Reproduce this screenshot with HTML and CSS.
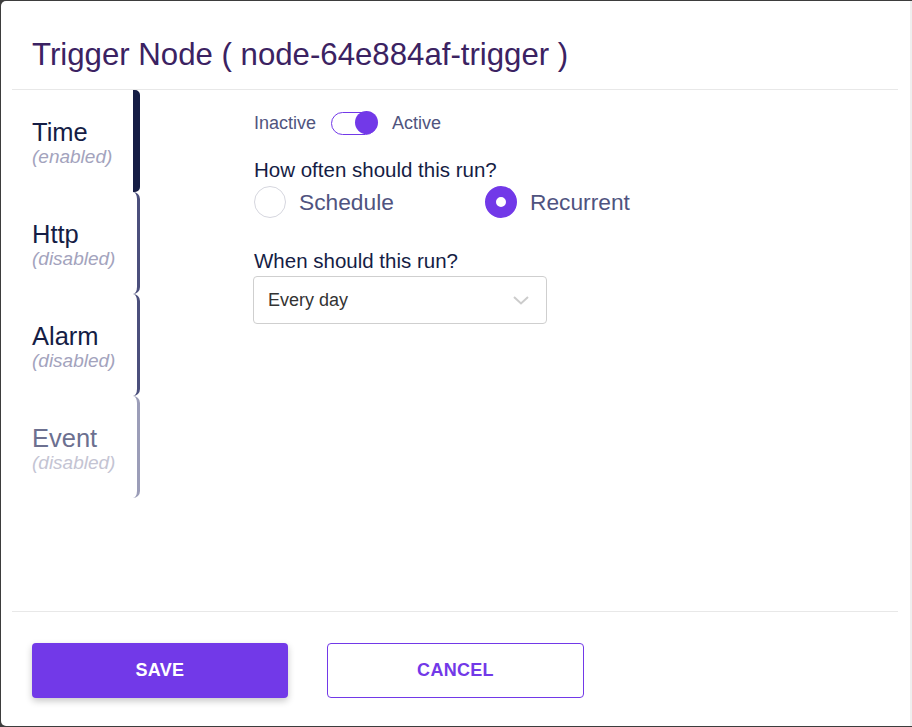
FILE: index.html
```html
<!DOCTYPE html>
<html lang="en">
<head>
<meta charset="utf-8">
<title>Trigger Node</title>
<link rel="stylesheet" href="styles.css">
</head>
<body>
<div class="backdrop">
  <div class="modal">
    <div class="modal-main">
      <header class="modal-header">
        <h1 class="title">Trigger Node ( node-64e884af-trigger )</h1>
      </header>
      <div class="modal-body">
        <nav class="tabs">
          <div class="tab tab-active"><span class="tab-name">Time</span><span class="tab-status">(enabled)</span></div>
          <div class="tab"><span class="tab-name">Http</span><span class="tab-status">(disabled)</span></div>
          <div class="tab"><span class="tab-name">Alarm</span><span class="tab-status">(disabled)</span></div>
          <div class="tab tab-muted"><span class="tab-name">Event</span><span class="tab-status">(disabled)</span></div>
        </nav>
        <section class="panel">
          <div class="switch-row">
            <span class="switch-label">Inactive</span>
            <span class="switch"><span class="switch-knob"></span></span>
            <span class="switch-label">Active</span>
          </div>
          <div class="question">How often should this run?</div>
          <div class="radio-row">
            <label class="radio-option"><span class="radio"></span><span class="radio-label">Schedule</span></label>
            <label class="radio-option"><span class="radio radio-checked"></span><span class="radio-label">Recurrent</span></label>
          </div>
          <div class="question question-second">When should this run?</div>
          <div class="select">
            <span class="select-value">Every day</span>
            <svg class="chevron" width="16" height="9" viewBox="0 0 16 9"><path d="M1 1 L8 7.5 L15 1" fill="none" stroke="#cccccc" stroke-width="2"/></svg>
          </div>
        </section>
      </div>
      <footer class="modal-footer">
        <button class="btn btn-primary">SAVE</button>
        <button class="btn btn-outline">CANCEL</button>
      </footer>
    </div>
    <div class="scroll-track"></div>
  </div>
</div>
</body>
</html>
```
FILE: styles.css
```css
* { box-sizing: border-box; }
html, body { margin: 0; padding: 0; }
body {
  background: #3d3d3d;
  font-family: "Liberation Sans", Arial, sans-serif;
  width: 912px;
  height: 727px;
  overflow: hidden;
}
.backdrop {
  padding: 1px 0 0 1px;
  height: 727px;
}
.modal {
  display: flex;
  height: 725px;
  background: #ffffff;
  border-radius: 5px 0 0 5px;
  overflow: hidden;
}
.modal-main {
  flex: 1;
  display: flex;
  flex-direction: column;
  padding: 0 12px 0 11px;
}
.scroll-track {
  width: 2px;
  background: #efefef;
}
.modal-header {
  height: 89px;
  border-bottom: 1px solid #e8e8e8;
  padding: 36px 0 0 20px;
}
.title {
  margin: 0;
  font-weight: 400;
  font-size: 31.2px;
  line-height: 36px;
  color: #3b2262;
}
.modal-body {
  flex: 1;
  display: flex;
}
.tabs {
  width: 128px;
  display: flex;
  flex-direction: column;
}
.tab {
  height: 102px;
  padding: 28px 0 0 20px;
  border-right: 3px solid #4b4f7c;
  border-radius: 0 7px 7px 0;
  display: flex;
  flex-direction: column;
}
.tab-active {
  border-right: 7px solid #151d45;
  border-radius: 3px 5px 5px 3px;
}
.tab-muted { border-right-color: #9b9db8; }
.tab-name {
  font-size: 25.5px;
  line-height: 28.75px;
  color: #151d45;
}
.tab-status {
  font-size: 19px;
  line-height: 19px;
  font-style: italic;
  color: #a3a3bd;
}
.tab-muted .tab-name { color: #6c7090; }
.tab-muted .tab-status { color: #c4c4d3; }
.panel {
  flex: 1;
  padding: 21px 0 0 114px;
}
.switch-row {
  display: flex;
  align-items: center;
  gap: 15px;
  height: 24px;
}
.switch-label {
  font-size: 18px;
  color: #50547e;
}
.switch {
  position: relative;
  width: 46px;
  height: 23px;
  border: 1.5px solid #7239e8;
  border-radius: 12px;
}
.switch-knob {
  position: absolute;
  top: -1.5px;
  right: -1.5px;
  width: 23px;
  height: 23px;
  border-radius: 50%;
  background: #7239e8;
}
.question {
  margin-top: 23px;
  font-size: 20.5px;
  line-height: 24px;
  color: #151d45;
}
.question-second { margin-top: 31px; }
.radio-row {
  margin-top: 4px;
  display: grid;
  grid-template-columns: 231px 231px;
  height: 32px;
}
.radio-option {
  display: flex;
  align-items: center;
  gap: 13px;
}
.radio {
  width: 32px;
  height: 32px;
  border-radius: 50%;
  border: 1px solid #d5d6de;
  background: #fff;
}
.radio-checked {
  border: 11px solid #7239e8;
}
.radio-label {
  font-size: 22.75px;
  color: #4f5380;
}
.select {
  margin: 3px 0 0 -1px;
  width: 294px;
  height: 48px;
  border: 1px solid #cfcfcf;
  border-radius: 4px;
  display: flex;
  align-items: center;
  justify-content: space-between;
  padding: 0 17px 0 14px;
}
.select-value {
  font-size: 18px;
  color: #333333;
}
.chevron { display: block; }
.modal-footer {
  height: 115px;
  border-top: 1px solid #e8e8e8;
  padding: 31px 0 0 20px;
  display: flex;
  align-items: flex-start;
  gap: 39px;
}
.btn {
  width: 256px;
  height: 55px;
  border-radius: 4px;
  font-family: "Liberation Sans", Arial, sans-serif;
  font-weight: 700;
  font-size: 18px;
  letter-spacing: 0.3px;
  cursor: pointer;
}
.btn-primary {
  background: #7239e8;
  color: #ffffff;
  border: none;
  box-shadow: 0 3px 7px rgba(0, 0, 0, 0.22);
}
.btn-outline {
  width: 257px;
  background: #ffffff;
  color: #7239e8;
  border: 1px solid #7239e8;
}
```
